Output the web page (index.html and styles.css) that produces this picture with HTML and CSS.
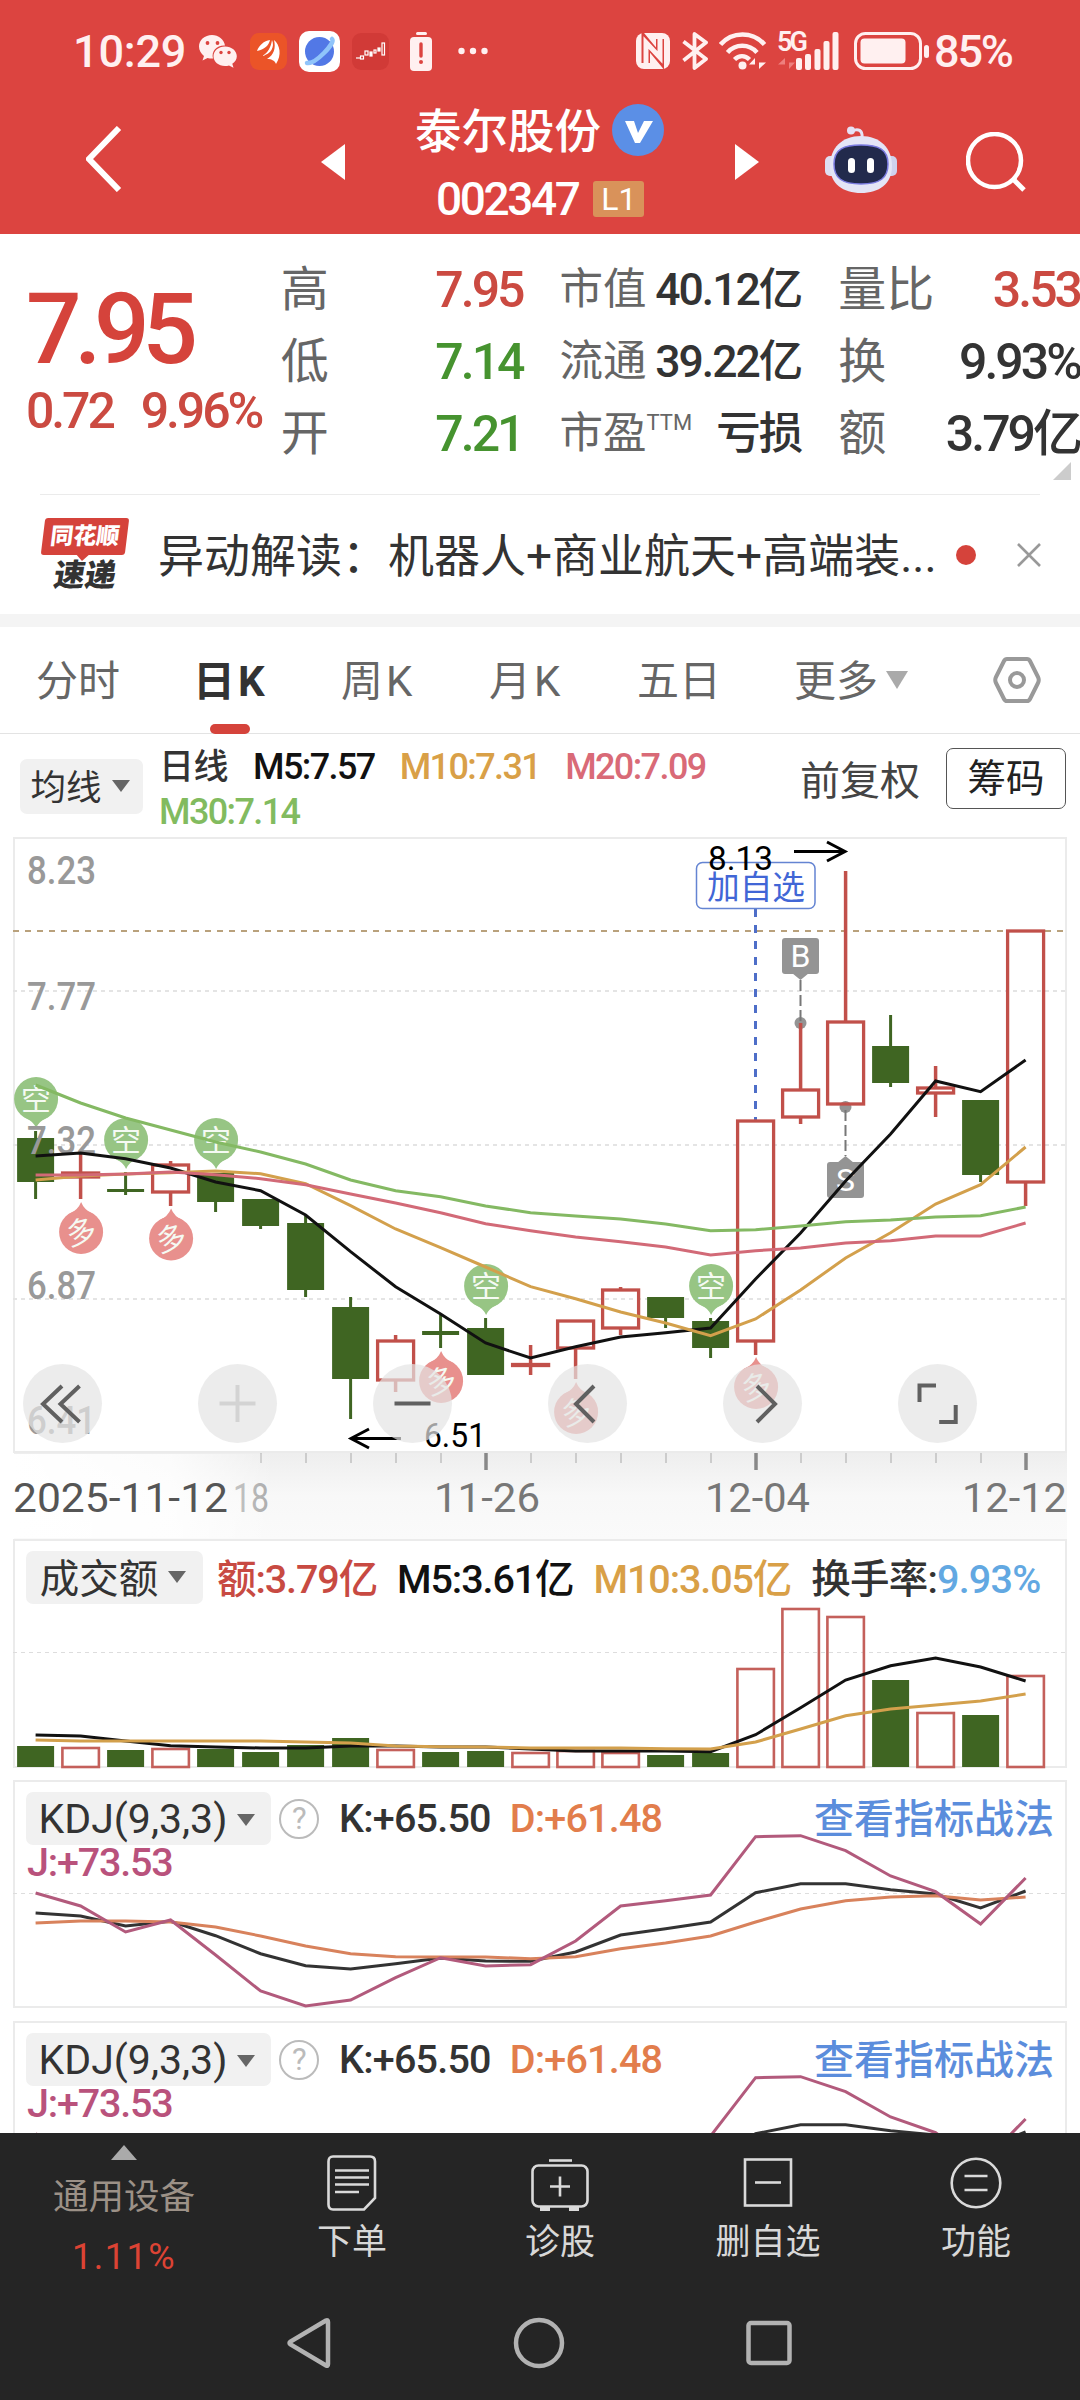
FILE: index.html
```
<!DOCTYPE html>
<html lang="zh-CN">
<head>
    <meta charset="UTF-8">
    <meta name="viewport" content="width=device-width, initial-scale=1.0">
    <title>泰尔股份 002347</title>
    <link rel="stylesheet" href="styles.css">
</head>
<body>
    <header class="header">
        <div class="status">
            <div class="status-left">
                <span class="clock">10:29</span>
                <svg class="ic-wechat" width="38" height="33" viewBox="0 0 38 33">
                    <path fill="#fff0f0" d="M13 0C5.800 0 0 5 0 11.500c0 4 2 7 5 9.500l-1.500 4.500 5-2.600c1.500.5 3 .7 4.500.7h1C12 16 18 10 26 10.500 25 4.500 19.500 0 13 0z"/>
                    <path fill="#fff0f0" d="M26 11.500c-6.500 0-11.500 4.300-11.500 9.700s5 9.800 11.500 9.800c1.400 0 2.800-.2 4-.6l4.500 2.300-1.200-4c2.800-1.800 4.500-4.500 4.500-7.500 0-5.400-5.200-9.700-11.800-9.700z"/>
                    <g fill="#dc4440"><circle cx="8.500" cy="8" r="1.900"/><circle cx="18.500" cy="8" r="1.900"/><circle cx="22" cy="17.500" r="1.700"/><circle cx="30" cy="17.500" r="1.700"/></g>
                </svg>
                <svg class="ic-orange" width="37" height="37" viewBox="0 0 37 37">
                    <rect width="37" height="37" rx="9" fill="#eb5428"/>
                    <path fill="#fff" d="M7 18c2-6 7-10 13-11-1 5-5 9-13 11z"/>
                    <path fill="#fff" d="M12 23c6-3 9-9 10-16 3 7-1 14-10 16z"/>
                    <path fill="#fff" d="M17 26c7-4 9-11 7-19 6 5 8 15 2 24-1-3-4-5-9-5z"/>
                </svg>
                <svg class="ic-planet" width="41" height="41" viewBox="0 0 41 41">
                    <rect width="41" height="41" rx="10" fill="#fff"/>
                    <circle cx="20.500" cy="20.500" r="14.500" fill="#5278e6"/>
                    <path d="M8 32c5 1 11-4 17-10s10-12 8-14" fill="none" stroke="#90c4fa" stroke-width="4.500" stroke-linecap="round"/>
                </svg>
                <svg class="ic-app" width="37" height="37" viewBox="0 0 37 37">
                    <rect width="37" height="37" rx="9" fill="#d13a37"/>
                    <g fill="none" stroke="#fff" stroke-width="1.200"><path d="M4 25h4"/><rect x="8.500" y="23" width="3" height="3"/><rect x="13" y="18" width="3" height="4"/><rect x="18" y="19" width="2" height="4" fill="#fff"/><rect x="22" y="17" width="2" height="3"/><rect x="26" y="15" width="2" height="3" fill="#fff"/><rect x="30" y="10" width="2.500" height="12"/></g>
                </svg>
                <svg class="ic-alert" width="23" height="39" viewBox="0 0 23 39">
                    <rect x="6" y="0" width="11" height="3" rx="1.500" fill="#fff0f0"/>
                    <rect y="5" width="22" height="34" rx="4" fill="#fff0f0"/>
                    <path d="M11 12v12" stroke="#dc4440" stroke-width="3.400" stroke-linecap="round"/>
                    <circle cx="11" cy="30" r="2" fill="#dc4440"/>
                </svg>
                <svg class="ic-dots" width="30" height="8" viewBox="0 0 30 8" fill="#fff0f0"><circle cx="3.500" cy="4" r="3.200"/><circle cx="15" cy="4" r="3.200"/><circle cx="26.500" cy="4" r="3.200"/></svg>
            </div>
            <div class="status-right">
                <svg width="34" height="36" viewBox="0 0 34 36">
                    <rect width="34" height="36" rx="8" fill="#fff0f0"/>
                    <path d="M9.500 30V8l14.500 17.500V6M10 10v16l0 4" fill="none" stroke="#dc4440" stroke-width="8"/>
                    <path d="M10 30.500V9.500l14 15V5.500" fill="none" stroke="#fff0f0" stroke-width="5"/>
                </svg>
                <svg class="ic-bt" width="26" height="38" viewBox="0 0 26 38"><path d="M1.500 9.500L24 27 12.500 36V2L24 10.500 1.500 28.500" fill="none" stroke="#fff0f0" stroke-width="3.800" stroke-linejoin="round"/></svg>
                <svg class="ic-wifi" width="48" height="38" viewBox="0 0 48 38">
                    <g fill="none" stroke="#fff0f0" stroke-width="4.500"><path d="M1.500 12.500C13-1 34-1 45.500 12.500"/><path d="M8.500 20.500c8-9 21.500-9 29.500 0"/><path d="M15.500 27.500c4.500-4.500 10.500-4.500 15 0"/></g>
                    <circle cx="23.500" cy="33.500" r="4" fill="#fff0f0"/>
                    <path d="M36 37V26l-6 6.500h6zM40 26v11l7-6.500h-7z" fill="#fff0f0"/>
                </svg>
                <div class="signal">
                    <span class="signal-net">5G</span>
                    <svg width="62" height="38" viewBox="0 0 62 38">
                        <path d="M8 37V26l-7 6.500h7zM12 26v11l6-6.500h-6z" fill="#ee7f7d"/>
                        <g fill="#fff0f0"><rect x="19" y="26" width="6" height="12" rx="2"/><rect x="28" y="22" width="6" height="16" rx="2"/><rect x="37.500" y="17" width="6" height="21" rx="2"/><rect x="46.500" y="9" width="6" height="29" rx="2"/><rect x="55.500" y="0" width="6" height="38" rx="2"/></g>
                    </svg>
                </div>
                <svg class="ic-battery" width="76" height="38" viewBox="0 0 76 38">
                    <rect x="1.500" y="1.500" width="65" height="35" rx="10" fill="none" stroke="#fff0f0" stroke-width="3"/>
                    <rect x="6.500" y="6.500" width="45" height="25" rx="4" fill="#fff0f0"/>
                    <rect x="70" y="13" width="5" height="13" rx="2.500" fill="#fff0f0"/>
                </svg>
                <span class="percent">85%</span>
            </div>
        </div>
        <div class="nav">
            <svg class="nav-back" width="36" height="66" viewBox="0 0 36 66"><path d="M33 2L3 33l30 31" fill="none" stroke="#fff" stroke-width="6"/></svg>
            <svg class="nav-prev" width="24" height="36" viewBox="0 0 24 36"><path d="M24 0v36L0 18z" fill="#fff"/></svg>
            <div class="stock">
                <div class="stock-name"><span>泰尔股份</span>
                    <svg width="52" height="52" viewBox="0 0 52 52"><circle cx="26" cy="26" r="26" fill="#5b8fe6"/><path d="M13 17h9l4 12 6-12h9L28 39h-5z" fill="#fff"/></svg>
                </div>
                <div class="stock-code">002347 <span class="level">L1</span></div>
            </div>
            <svg class="nav-next" width="24" height="36" viewBox="0 0 24 36"><path d="M0 0v36l24-18z" fill="#fff"/></svg>
            <svg class="nav-robot" width="72" height="68" viewBox="0 0 72 68">
                <path d="M27 5c6-3 11-1 10 7" fill="none" stroke="#e6e4f6" stroke-width="3"/>
                <circle cx="26" cy="4.500" r="4" fill="#e6e0f4"/>
                <rect x="0" y="30" width="12" height="20" rx="5" fill="#dedff2"/><rect x="60" y="30" width="12" height="20" rx="5" fill="#cfd2ee"/>
                <path d="M36 10c19 0 31 12 31 30S54 67 36 67 5 58 5 40s12-30 31-30z" fill="#e4e5f6"/>
                <path d="M36 19c17 0 27 4 27 19 0 14-8 20-27 20S9 52 9 38c0-15 10-19 27-19z" fill="#222a4c" stroke="#7a7be0" stroke-width="1.500"/>
                <rect x="23" y="32" width="7" height="15" rx="3.500" fill="#fff"/><rect x="42" y="32" width="7" height="15" rx="3.500" fill="#fff"/>
            </svg>
            <svg class="nav-search" width="60" height="60" viewBox="0 0 60 60"><circle cx="28.500" cy="28.500" r="26.500" fill="none" stroke="#fff" stroke-width="4.500"/><path d="M47 47l11 11" stroke="#fff" stroke-width="5"/></svg>
        </div>
    </header>

    <section class="quote">
        <div class="quote-main">
            <div class="price">7.95</div>
            <div class="change"><span>0.72</span><span>9.96%</span></div>
        </div>
        <div class="quote-col">
            <div class="row"><label>高</label><b class="up">7.95</b></div>
            <div class="row"><label>低</label><b class="down">7.14</b></div>
            <div class="row"><label>开</label><b class="down">7.21</b></div>
        </div>
        <div class="quote-col small">
            <div class="row"><label>市值</label><b>40.12亿</b></div>
            <div class="row"><label>流通</label><b>39.22亿</b></div>
            <div class="row"><label>市盈<sup>TTM</sup></label><b>亏损</b></div>
        </div>
        <div class="quote-col">
            <div class="row"><label>量比</label><b class="up">3.53</b></div>
            <div class="row"><label>换</label><b>9.93%</b></div>
            <div class="row"><label>额</label><b>3.79亿</b></div>
        </div>
        <span class="corner"></span>
    </section>

    <section class="news">
        <div class="news-logo">
            <span class="logo-top">同花顺</span>
            <span class="logo-bottom">速递</span>
        </div>
        <div class="news-text">异动解读：机器人+商业航天+高端装...</div>
        <span class="news-dot"></span>
        <svg width="24" height="24" viewBox="0 0 24 24"><path d="M1 1l22 22M23 1L1 23" stroke="#999" stroke-width="2.600"/></svg>
    </section>

    <nav class="tabs">
        <span class="tab">分时</span>
        <span class="tab tab-k active">日K</span>
        <span class="tab tab-k">周K</span>
        <span class="tab tab-k">月K</span>
        <span class="tab">五日</span>
        <span class="tab">更多<i class="caret"></i></span>
        <svg width="48" height="46" viewBox="0 0 48 46" fill="none" stroke="#999" stroke-width="4"><path d="M14 2h20q2 0 3 2l8 16q1.500 3 0 6l-8 16q-1 2-3 2H14q-2 0-3-2L3 26q-1.500-3 0-6l8-16q1-2 3-2z"/><circle cx="24" cy="23" r="7"/></svg>
    </nav>

    <div class="ma-row">
        <span class="picker">均线<i class="caret"></i></span>
        <div class="ma-values">
            <span>日线</span><span class="c-black">M5:7.57</span><span class="c-gold">M10:7.31</span><span class="c-pink">M20:7.09</span><span class="c-green">M30:7.14</span>
        </div>
        <span class="adjust">前复权</span>
        <span class="chips">筹码</span>
    </div>

    <div class="panel kline">
        <svg id="kline" viewBox="0 837 1080 702"></svg>
    </div>

    <div class="panel volume">
        <svg id="volume" viewBox="0 1539 1080 230"></svg>
        <div class="panel-head">
            <span class="picker">成交额<i class="caret"></i></span>
            <span class="c-red">额:3.79亿</span>
            <span class="c-black">M5:3.61亿</span>
            <span class="c-gold">M10:3.05亿</span>
            <span class="turnover">换手率:<em>9.93%</em></span>
        </div>
    </div>

    <div class="panel kdj">
        <svg class="kdj-chart" viewBox="0 0 1080 230"></svg>
        <div class="panel-head">
            <span class="picker">KDJ(9,3,3)<i class="caret"></i></span>
            <span class="help">?</span>
            <span class="kdj-k">K:+65.50</span>
            <span class="kdj-d">D:+61.48</span>
            <span class="link">查看指标战法</span>
        </div>
        <div class="kdj-j">J:+73.53</div>
    </div>

    <div class="panel kdj last">
        <svg class="kdj-chart" viewBox="0 0 1080 230"></svg>
        <div class="panel-head">
            <span class="picker">KDJ(9,3,3)<i class="caret"></i></span>
            <span class="help">?</span>
            <span class="kdj-k">K:+65.50</span>
            <span class="kdj-d">D:+61.48</span>
            <span class="link">查看指标战法</span>
        </div>
        <div class="kdj-j">J:+73.53</div>
    </div>

    <footer class="footer">
        <div class="toolbar">
            <div class="sector"><i class="caret-up"></i><span>通用设备</span><b>1.11%</b></div>
            <div class="tool">
                <svg width="50" height="56" viewBox="0 0 50 56" fill="none" stroke="#dadada" stroke-width="2.600"><path d="M6 1.500h37q5 0 5 5V43L37 54.500H6q-4.500 0-4.500-5v-43q0-5 4.500-5z"/><path d="M8 15.500h34M8 22.500h34M8 29.500h34M8 37h24"/></svg>
                <span>下单</span>
            </div>
            <div class="tool">
                <svg width="58" height="56" viewBox="0 0 58 56" fill="none" stroke="#dadada" stroke-width="2.600"><path d="M18 5.500h23"/><rect x="1.500" y="10.500" width="55" height="41" rx="6"/><path d="M29 21.500v20M19 31.500h20"/><path d="M9 54h10M38 54h10" stroke-width="4"/></svg>
                <span>诊股</span>
            </div>
            <div class="tool">
                <svg width="50" height="56" viewBox="0 0 50 56" fill="none" stroke="#dadada" stroke-width="2.600"><rect x="2" y="4.500" width="46" height="46"/><path d="M12 27.500h26"/></svg>
                <span>删自选</span>
            </div>
            <div class="tool">
                <svg width="54" height="56" viewBox="0 0 54 56" fill="none" stroke="#dadada" stroke-width="2.600"><circle cx="27" cy="28" r="24.300"/><path d="M15.500 21h23M15.500 35h23"/></svg>
                <span>功能</span>
            </div>
        </div>
        <div class="sysnav">
            <svg width="46" height="52" viewBox="0 0 46 52"><path d="M40 3.500L4.500 24.500q-2 1.500 0 3L40 48.500q2 1 2-1.500V5q0-2.500-2-1.500z" fill="none" stroke="#b2b2b2" stroke-width="4.500"/></svg>
            <svg width="52" height="52" viewBox="0 0 52 52"><circle cx="26" cy="26" r="23" fill="none" stroke="#b2b2b2" stroke-width="4.500"/></svg>
            <svg width="48" height="48" viewBox="0 0 48 48"><rect x="3.500" y="4" width="41" height="40" rx="2.500" fill="none" stroke="#b2b2b2" stroke-width="4.500"/></svg>
        </div>
    </footer>

    <script>
        const RED = '#c1504a';
        const GREEN = '#3f6522';
        const STEP = 45;
        const START = 35.6;

        // [direction, body top, body bottom, high, low]
        const candles = [
            ['g', 1138, 1182, 1131, 1199], ['r', 1173, 1177, 1154, 1199], ['g', 1189, 1192, 1172, 1195],
            ['r', 1165, 1192, 1161, 1206], ['g', 1173, 1202, 1173, 1212], ['g', 1199, 1226, 1199, 1229],
            ['g', 1223, 1290, 1215, 1297], ['g', 1307, 1379, 1297, 1419], ['r', 1341, 1380, 1335, 1392],
            ['g', 1331, 1335, 1315, 1348], ['g', 1328, 1375, 1318, 1375], ['r', 1364.500, 1365.500, 1345, 1375],
            ['r', 1321, 1348, 1320, 1379], ['r', 1290, 1328, 1287, 1335], ['g', 1297, 1318, 1297, 1328],
            ['g', 1321, 1348, 1318, 1358], ['r', 1121, 1341, 1120, 1355], ['r', 1090, 1117, 1023, 1124],
            ['r', 1022, 1104, 871, 1105], ['g', 1046, 1083, 1015, 1087], ['r', 1088, 1093, 1066, 1117],
            ['g', 1100, 1175, 1100, 1182], ['r', 931, 1182, 931, 1206]
        ];
        const ma5 = [1156, 1153, 1158.700, 1168, 1182, 1190.700, 1215, 1251.700, 1286.700, 1314, 1343, 1358, 1346.700, 1337, 1332.700, 1328, 1279, 1233, 1181, 1134, 1081, 1091.700, 1060];
        const ma10 = [1180, 1176, 1174, 1172.700, 1171, 1173.700, 1183.700, 1205.700, 1229, 1247.700, 1267, 1286.700, 1298.700, 1312, 1323, 1335.700, 1319, 1290, 1258, 1232.700, 1204, 1184.700, 1147];
        const ma20 = [1175, 1175, 1174, 1172, 1174.700, 1178.700, 1184.700, 1194, 1203, 1212.700, 1223.700, 1230.700, 1237, 1241.700, 1247, 1255, 1250.700, 1248, 1243, 1240.700, 1236, 1236, 1223];
        const ma30 = [1085, 1103, 1118, 1130, 1142, 1152, 1164, 1180, 1190.700, 1196.700, 1206, 1212.700, 1216, 1219, 1224, 1230.700, 1229.700, 1226, 1221.700, 1220, 1217, 1215.700, 1207];

        const volumeTops = [1746, 1747, 1750, 1748, 1749, 1752, 1745, 1738, 1749, 1752, 1751, 1752, 1750, 1752, 1755, 1753, 1668, 1608, 1616, 1680, 1712, 1715, 1675];
        const vol5 = [1735, 1736, 1741, 1745.700, 1747, 1748, 1748, 1746, 1746, 1747, 1747, 1749, 1751, 1751, 1751, 1751.700, 1734.700, 1707.700, 1680, 1665.700, 1658, 1667, 1681];
        const vol10 = [1740, 1741, 1741, 1741, 1741, 1741, 1742, 1743, 1746, 1746.700, 1747, 1748, 1748, 1748, 1748.700, 1749, 1742, 1729, 1715.700, 1709, 1705, 1701, 1694];

        const kLine = [133, 136, 146, 141.300, 155.700, 173.700, 185.700, 189, 183.700, 178, 181, 181.300, 172, 155, 148.700, 142, 112.700, 103.700, 103.700, 109.700, 114, 128, 111];
        const dLine = [143, 141, 141, 142, 147, 156, 166, 173.700, 176.700, 177, 177, 178.700, 176.700, 168.700, 163, 156, 142, 129, 120.700, 117, 115.700, 120, 117];
        const jLine = [113, 126, 152, 140, 175, 211, 226, 220, 197.700, 177.700, 186, 184.700, 161, 126, 120.700, 115, 56.700, 55.700, 70.700, 96, 111.700, 144, 98];

        const cx = i => START + STEP * i;

        function polyline(data, color) {
            const points = data.map((y, i) => `${cx(i)},${y}`).join(' ');
            return `<polyline points="${points}" fill="none" stroke="${color}" stroke-width="3"/>`;
        }

        function grid(y, color = '#e4e4e4', width = 2, dash = '4 4') {
            return `<path d="M13 ${y}H1066" stroke="${color}" stroke-width="${width}" stroke-dasharray="${dash}"/>`;
        }

        function frame(top, height) {
            return `<rect x="14" y="${top}" width="1052" height="${height}" fill="none" stroke="#ebebeb" stroke-width="2"/>`;
        }

        function text(x, y, size, width, color, value, extra = '') {
            return `<text x="${x}" y="${y}" font-size="${size}" textLength="${width}" lengthAdjust="spacingAndGlyphs" fill="${color}" ${extra}>${value}</text>`;
        }

        function candle([dir, top, bottom, high, low], i) {
            const x = cx(i);
            if (dir === 'g') {
                return `<path d="M${x} ${high}V${low}" stroke="${GREEN}" stroke-width="3"/>
                    <rect x="${x - 18.500}" y="${top}" width="37" height="${bottom - top}" fill="${GREEN}"/>`;
            }
            return `<path d="M${x} ${high}V${top}M${x} ${bottom}V${low}" stroke="${RED}" stroke-width="3.500"/>
                <rect x="${x - 18}" y="${top}" width="36" height="${bottom - top}" fill="none" stroke="${RED}" stroke-width="3.300"/>`;
        }

        // bubbles: short signal points down, long signal points up
        function bubble(i, y, kind) {
            const x = cx(i) + 0.500;
            const short = kind === 'short';
            const color = short ? '#97c584' : '#e8908d';
            const tip = short ? `M${x - 12} ${y + 18}Q${x - 3} ${y + 22} ${x} ${y + 29}Q${x + 3} ${y + 22} ${x + 12} ${y + 18}z`
                              : `M${x - 12} ${y - 18}Q${x - 3} ${y - 22} ${x} ${y - 30}Q${x + 3} ${y - 22} ${x + 12} ${y - 18}z`;
            const turn = short ? '' : `transform="rotate(-14 ${x} ${y})"`;
            return `<circle cx="${x}" cy="${y}" r="22" fill="${color}"/><path d="${tip}" fill="${color}"/>
                <text x="${x}" y="${y + 11}" font-size="30" text-anchor="middle" fill="#f5faf3" ${turn}>${short ? '空' : '多'}</text>`;
        }

        function roundButton(x, icon, color = '#606060') {
            return `<circle cx="${x}" cy="1403.500" r="39.500" fill="rgba(228,228,228,.7)"/>
                <path d="${icon}" fill="none" stroke="${color}" stroke-width="4"/>`;
        }

        function drawKline() {
            let out = `<defs>
                <linearGradient id="axis" x1="0" y1="0" x2="0" y2="1"><stop offset="0" stop-color="#eee"/><stop offset=".5" stop-color="#f8f8f8"/><stop offset="1" stop-color="#fafafa"/></linearGradient>
                <linearGradient id="fade" x1="0" y1="0" x2="1" y2="0"><stop offset="0" stop-color="#fff"/><stop offset=".6" stop-color="#fff" stop-opacity=".8"/><stop offset="1" stop-color="#fff" stop-opacity="0"/></linearGradient>
                </defs>
                <rect x="14" y="1453" width="1053" height="86" fill="url(#axis)"/>`;
            out += frame(838, 614) + grid(991) + grid(1145) + grid(1299) + grid(931, '#b9a17c', 2, '6 6');

            [[0, 1099], [2, 1140], [4, 1140], [10, 1286], [15, 1286]].forEach(b => out += bubble(b[0], b[1], 'short'));
            [[1, 1232], [3, 1238.500], [9, 1381], [12, 1412], [16, 1387]].forEach(b => out += bubble(b[0], b[1], 'long'));

            // watchlist marker
            out += `<path d="M755.500 909V1120" stroke="#4e6ec8" stroke-width="3" stroke-dasharray="8 8"/>
                <rect x="696.500" y="862.500" width="118.500" height="46" rx="6" fill="#fff" stroke="#6484d2" stroke-width="1.500"/>`;
            out += text(707, 899, 32.500, 98, '#4166d6', '加自选');

            // trade points
            out += `<g fill="#949494"><circle cx="800.500" cy="1023" r="6"/><circle cx="845.500" cy="1107" r="6"/>
                <rect x="782" y="938" width="37" height="36" rx="3"/><path d="M792 973h17l-8.500 7zM837 1163h17l-8.500-7z"/>
                <rect x="827" y="1162" width="37" height="36" rx="3"/></g>
                <path d="M800.500 980V1023M845.500 1110V1156" stroke="#777" stroke-width="2" stroke-dasharray="11 4"/>
                <g fill="#fff" font-size="32" text-anchor="middle"><text x="800.500" y="967">B</text><text x="845.500" y="1191">S</text></g>`;

            candles.forEach((c, i) => out += candle(c, i));

            [['8.23', 884], ['7.77', 1010], ['7.32', 1154], ['6.87', 1299], ['6.41', 1434]].forEach(l => {
                out += text(27, l[1], 39.500, 69, '#999', l[0], 'font-weight="500"');
            });

            out += polyline(ma5, '#111') + polyline(ma10, '#d3a04c') + polyline(ma20, '#d26a77') + polyline(ma30, '#84b963');

            out += '<path d="M794 851.500H845M827 842l18 9.500-18 9.500M401 1438.500H351M369 1429l-18 9.500 18 9.500" fill="none" stroke="#000" stroke-width="3"/>';
            out += text(708, 870, 33, 65, '#000', '8.13') + text(424, 1447, 33, 62, '#000', '6.51');

            out += roundButton(62.500, 'M62 1386l-19 18 19 18M79.500 1386l-19 18 19 18');
            out += roundButton(237.500, 'M219.500 1403.500h36M237.500 1385v37', '#d3d3d3');
            out += roundButton(412.500, 'M394.500 1403.500h36');
            out += roundButton(587.500, 'M594 1386l-18 18 18 18');
            out += roundButton(762.500, 'M757 1386l18 18-18 18');
            out += roundButton(937.500, 'M919.500 1402v-16.500h16.500M955.700 1405v17h-16.500');

            // date axis
            for (let i = 5; i < 23; i++) {
                const major = i === 10 || i === 16 || i === 22;
                out += `<path d="M${cx(i) + 0.400} 1453v${major ? 17 : 10}" stroke="${major ? '#888' : '#ccc'}" stroke-width="${major ? 3.500 : 2}"/>`;
            }
            out += text(233, 1512, 40, 36, '#aaa', '18');
            out += '<rect x="14" y="1454" width="260" height="84" fill="url(#fade)"/>';
            out += text(13, 1512, 40, 215, '#555', '2025-11-12');
            out += text(434, 1512, 40, 106, '#777', '11-26');
            out += text(705, 1512, 40, 105, '#777', '12-04');
            out += text(962, 1512, 40, 105, '#777', '12-12');
            document.getElementById('kline').innerHTML = out;
        }

        function drawVolume() {
            let out = frame(1540, 227) + grid(1652.500, '#ddd', 1);
            volumeTops.forEach((top, i) => {
                const x = cx(i);
                if (candles[i][0] === 'g') {
                    out += `<rect x="${x - 18.500}" y="${top}" width="37" height="${1767 - top}" fill="${GREEN}"/>`;
                } else {
                    out += `<rect x="${x - 18.200}" y="${top + 1}" width="36.500" height="${1766 - top}" fill="none" stroke="#c4605b" stroke-width="2.600"/>`;
                }
            });
            out += polyline(vol5, '#111') + polyline(vol10, '#d3a04c');
            document.getElementById('volume').innerHTML = out;
        }

        function drawKdj() {
            const out = frame(1, 226) + grid(113.500, '#ddd', 1)
                + polyline(kLine, '#333') + polyline(dLine, '#d8825c') + polyline(jLine, '#b25a7c');
            document.querySelectorAll('.kdj-chart').forEach(svg => svg.innerHTML = out);
        }

        drawKline();
        drawVolume();
        drawKdj();
    </script>
</body>
</html>
```

FILE: styles.css
```
* {
    box-sizing: border-box;
}

body {
    margin: 0;
    width: 1080px;
    height: 2400px;
    overflow: hidden;
    background: #fff;
    color: #333;
    font-family: Roboto, "Noto Sans CJK SC", sans-serif;
    display: flex;
    flex-direction: column;
}

svg {
    display: block;
    flex: none;
}

b, i, em {
    font-style: normal;
}

/* header */
.header {
    height: 234px;
    background: #dc4440;
    color: #fff;
    flex: none;
}

.status {
    height: 102px;
    display: flex;
    justify-content: space-between;
    padding: 0 66px 0 73px;
    color: #fff0f0;
}

.status-left, .status-right {
    display: flex;
    align-items: center;
}

.clock {
    width: 112px;
    font-size: 45px;
    font-weight: 500;
    letter-spacing: -0.2px;
}

.ic-wechat { margin-left: 14px; }
.ic-orange { margin-left: 13px; }
.ic-planet { margin-left: 12px; }
.ic-app { margin-left: 12px; }
.ic-alert { margin-left: 21px; }
.ic-dots { margin-left: 25px; }
.ic-bt { margin-left: 12px; }
.ic-wifi { margin-left: 11px; }

.signal {
    position: relative;
    margin-left: 10px;
}

.signal-net {
    position: absolute;
    left: 0;
    top: -4px;
    font-size: 27px;
    line-height: 28px;
    font-weight: 600;
    letter-spacing: -3px;
}

.ic-battery { margin-left: 15px; }

.percent {
    width: 80px;
    margin-left: 4px;
    font-size: 45px;
    font-weight: 500;
    letter-spacing: -2.2px;
    white-space: nowrap;
}

.nav {
    height: 132px;
    display: flex;
    align-items: flex-start;
}

.nav-back { margin: 24px 0 0 86px; }
.nav-prev { margin: 42px 0 0 199px; }

.stock {
    width: 390px;
    padding-top: 2px;
}

.stock-name {
    display: flex;
    align-items: center;
    height: 52px;
    padding-left: 70px;
    font-size: 46.5px;
    font-weight: 500;
    white-space: nowrap;
}

.stock-name span {
    margin-top: -5px;
}

.stock-name svg {
    margin-left: 11px;
}

.stock-code {
    display: flex;
    align-items: center;
    height: 80px;
    padding: 5px 0 0 91px;
    font-size: 46px;
    font-weight: 500;
    letter-spacing: -2.4px;
}

.level {
    width: 51px;
    height: 36px;
    margin-left: 15px;
    border-radius: 3px;
    background: #d9925a;
    font-size: 32px;
    line-height: 36px;
    font-weight: 400;
    letter-spacing: 0;
    text-align: center;
}

.nav-next { margin-top: 42px; }
.nav-robot { margin: 24px 0 0 66px; }
.nav-search { margin: 30px 0 0 69px; }

/* quote */
.quote {
    position: relative;
    height: 260px;
    padding-top: 20px;
    display: flex;
    flex: none;
}

.quote-main {
    width: 281px;
    padding: 23px 0 0 26px;
    color: #d5433b;
}

.price {
    height: 99px;
    font-size: 98px;
    line-height: 106px;
    font-weight: 500;
    letter-spacing: -7.5px;
}

.change {
    display: flex;
    gap: 28px;
    font-size: 50px;
    line-height: 70px;
    font-weight: 500;
    letter-spacing: -3.1px;
    color: #cb4a41;
}

.quote-col {
    width: 242px;
    margin-right: 37px;
    font-size: 48px;
}

.quote-col:last-of-type {
    margin-right: 0;
}

.row {
    display: flex;
    justify-content: space-between;
    height: 72px;
    line-height: 72px;
    white-space: nowrap;
}

.row label {
    color: #666;
}

.row b {
    font-size: 50px;
    font-weight: 500;
    letter-spacing: -3px;
}

.quote-col.small {
    font-size: 43.5px;
}

.quote-col.small b {
    font-size: 44.5px;
    letter-spacing: -2px;
}

.row sup {
    font-size: 22px;
    line-height: 0;
    vertical-align: 18px;
}

.up { color: #cb4a41; }
.down { color: #46932f; }

.corner {
    position: absolute;
    right: 9px;
    top: 228px;
    border-left: 18px solid transparent;
    border-bottom: 18px solid #ccc;
}

/* news */
.news {
    height: 120px;
    margin: 0 40px;
    padding-left: 3px;
    border-top: 1px solid #ebebeb;
    display: flex;
    align-items: center;
    flex: none;
}

.news-logo {
    width: 86px;
    margin-right: 31px;
    display: flex;
    flex-direction: column;
    align-items: center;
}

.logo-top {
    width: 84px;
    height: 37px;
    border-radius: 3px;
    background: #d5433b;
    color: #fff;
    font-size: 23px;
    line-height: 37px;
    font-weight: 900;
    text-align: center;
    transform: skewX(-7deg);
}

.logo-bottom {
    margin-top: 5px;
    font-size: 31px;
    line-height: 32px;
    font-weight: 900;
    transform: skewX(-9deg);
}

.logo-top::after {
    content: "";
    display: block;
    width: 0;
    margin: 0 auto;
    border: solid transparent;
    border-width: 6px 6px 0;
    border-top-color: #d5433b;
}

.news-text {
    width: 774px;
    padding-bottom: 6px;
    font-size: 46px;
    white-space: nowrap;
}

.news-dot {
    width: 20px;
    height: 20px;
    margin: 0 41px 0 24px;
    border-radius: 50%;
    background: #d5433b;
    flex: none;
}

/* period tabs */
.tabs {
    height: 120px;
    border-top: 13px solid #f4f4f4;
    border-bottom: 1px solid #e3e3e3;
    padding: 0 39px 0 36px;
    display: flex;
    align-items: center;
    flex: none;
    font-size: 42px;
    color: #666;
}

.tab {
    position: relative;
    display: flex;
    align-items: center;
    width: 157px;
    padding-bottom: 6px;
    white-space: nowrap;
}

.tab-k {
    width: 148px;
    letter-spacing: 3px;
}

.tab.active {
    color: #333;
    font-weight: 700;
}

.tab.active::after {
    content: "";
    position: absolute;
    left: 17px;
    bottom: -20px;
    width: 40px;
    height: 10px;
    border-radius: 5px;
    background: #d5433b;
}

.tabs svg {
    margin-left: auto;
}

.tab .caret {
    border-width: 18px 11px 0;
    border-top-color: #aaa;
    margin: 5px 0 0 8px;
}

.caret {
    display: inline-block;
    border: solid transparent;
    border-width: 12px 9px 0;
    border-top-color: #666;
    margin-left: 10px;
}

/* moving averages */
.ma-row {
    height: 103px;
    display: flex;
    align-items: flex-start;
    padding: 14px 14px 0 20px;
    flex: none;
}

.picker {
    display: flex;
    align-items: center;
    justify-content: center;
    height: 53px;
    padding: 0 3px 4px 0;
    border-radius: 7px;
    background: #f1f1f1;
    color: #333;
    white-space: nowrap;
}

.picker .caret {
    margin-top: 3px;
}

.ma-row .picker {
    width: 123px;
    height: 55px;
    margin-top: 11px;
    font-size: 35.5px;
}

.ma-values {
    width: 640px;
    margin-top: -3px;
    padding-left: 16px;
    display: flex;
    flex-wrap: wrap;
    column-gap: 25px;
    font-size: 36px;
    line-height: 45px;
    font-weight: 500;
    letter-spacing: -1.6px;
}

.ma-values span:first-child {
    font-size: 35px;
    letter-spacing: -0.5px;
}

.adjust {
    font-size: 40px;
    line-height: 68px;
    color: #444;
    width: 120px;
    margin-left: 17px;
    white-space: nowrap;
}

.chips {
    width: 120px;
    height: 61px;
    margin-left: auto;
    border: 1px solid #555;
    border-radius: 7px;
    font-size: 38.5px;
    line-height: 60px;
    text-align: center;
    color: #222;
}

.c-black { color: #111; }
.c-gold { color: #d9a047; }
.c-pink { color: #d96a77; }
.c-green { color: #82bb5f; }
.c-red { color: #c84a42; }

/* chart panels */
.panel {
    position: relative;
    flex: none;
}

.panel > svg {
    position: absolute;
    left: 0;
    top: 0;
    width: 1080px;
}

.kline {
    height: 702px;
}

.volume {
    height: 241px;
}

.kdj {
    height: 241px;
}

.kdj.last {
    height: 112px;
    overflow: hidden;
}

.panel-head {
    position: relative;
    display: flex;
    align-items: center;
    height: 53px;
    margin-top: 12px;
    padding: 0 26px 0 26px;
    font-size: 39.5px;
    font-weight: 500;
    letter-spacing: -0.8px;
    white-space: nowrap;
}

.volume .picker {
    width: 177px;
    margin-right: 14px;
    font-weight: 400;
    letter-spacing: 0;
}

.volume .c-red, .volume .c-black, .volume .c-gold {
    margin-right: 20px;
    padding-bottom: 5px;
    letter-spacing: -1.1px;
}

.turnover {
    padding-bottom: 5px;
}

.volume em {
    color: #62a8e2;
}

.kdj .picker {
    width: 245px;
    padding-bottom: 0;
    font-size: 41px;
    font-weight: 400;
    letter-spacing: 0;
}

.help {
    width: 40px;
    height: 40px;
    margin: 0 20px 0 8px;
    border: 2.5px solid #bbb;
    border-radius: 50%;
    color: #bbb;
    font-size: 31px;
    line-height: 36px;
    font-weight: 400;
    text-align: center;
}

.kdj-d {
    margin-left: 19px;
    color: #e27d4c;
}

.link {
    margin-left: auto;
    padding-bottom: 5px;
    color: #5b8ddc;
    font-size: 40px;
    letter-spacing: 0;
}

.kdj-j {
    position: relative;
    margin: -5px 0 0 27px;
    font-size: 39.5px;
    line-height: 46px;
    font-weight: 500;
    letter-spacing: -1.2px;
    color: #b9527c;
}

/* bottom */
.footer {
    height: 267px;
    background: #252525;
    flex: none;
}

.toolbar {
    display: flex;
    height: 160px;
}

.sector {
    width: 248px;
    display: flex;
    flex-direction: column;
    align-items: center;
    padding-top: 12px;
    font-size: 35.5px;
    color: #9c9187;
}

.sector span {
    margin-top: 11px;
    line-height: 52px;
}

.sector b {
    margin-top: 9px;
    font-size: 36px;
    line-height: 50px;
    font-weight: 400;
    letter-spacing: 1.5px;
    color: #dc4334;
}

.caret-up {
    border: solid transparent;
    border-width: 0 13px 15px;
    border-bottom-color: #aaa;
}

.tool {
    width: 208px;
    display: flex;
    flex-direction: column;
    align-items: center;
    padding-top: 22px;
    font-size: 35px;
    color: #d8d8d8;
}

.tool span {
    margin-top: 6px;
    line-height: 52px;
}

.sysnav {
    display: flex;
    align-items: center;
    justify-content: space-between;
    padding: 0 287px 0 286px;
    height: 100px;
}
```
